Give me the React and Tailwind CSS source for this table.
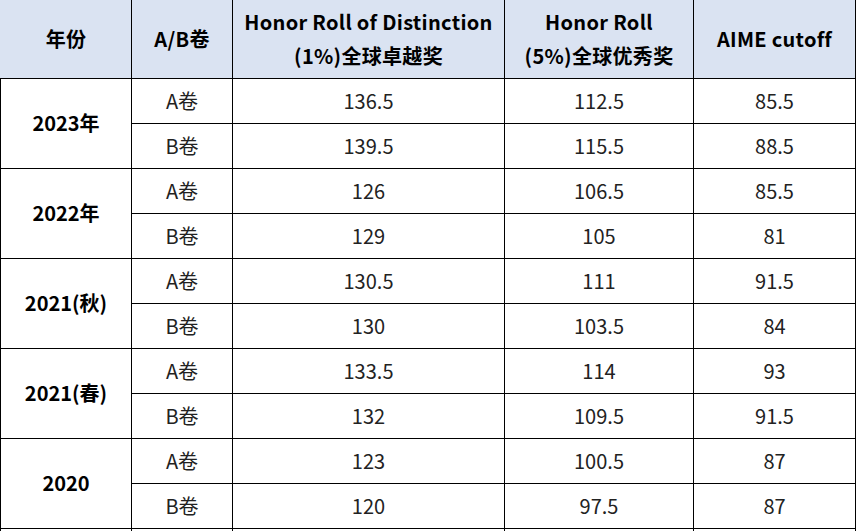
const rows = [
  { year: '2023年', a: ['136.5', '112.5', '85.5'], b: ['139.5', '115.5', '88.5'] },
  { year: '2022年', a: ['126', '106.5', '85.5'], b: ['129', '105', '81'] },
  { year: '2021(秋)', a: ['130.5', '111', '91.5'], b: ['130', '103.5', '84'] },
  { year: '2021(春)', a: ['133.5', '114', '93'], b: ['132', '109.5', '91.5'] },
  { year: '2020', a: ['123', '100.5', '87'], b: ['120', '97.5', '87'] },
]

const cell = 'border border-black text-center align-middle p-0'

function App() {
  return (
    <div
      className="h-[531px] w-[856px] overflow-hidden bg-white text-[#222]"
      style={{ fontFamily: '"Noto Sans CJK SC", "Noto Sans", sans-serif' }}
    >
      <table className="table-fixed border-collapse w-[855px]">
        <colgroup>
          <col className="w-[131px]" />
          <col className="w-[101px]" />
          <col className="w-[272px]" />
          <col className="w-[189px]" />
          <col className="w-[162px]" />
        </colgroup>
        <thead>
          <tr className="h-[78px] bg-[#dae3f2] text-[20px] font-bold text-black leading-[34px] tracking-[0.3px]">
            <th className={`${cell} border-t-0 border-l-[#dae3f2]`}>年份</th>
            <th className={`${cell} border-t-0`}>A/B卷</th>
            <th className={`${cell} border-t-0`}>
              Honor Roll of Distinction
              <br />
              (1%)全球卓越奖
            </th>
            <th className={`${cell} border-t-0`}>
              Honor Roll
              <br />
              (5%)全球优秀奖
            </th>
            <th className={`${cell} border-t-0`}>AIME cutoff</th>
          </tr>
        </thead>
        <tbody className="text-[20px]">
          {rows.map((r) => (
            <>
              <tr key={r.year + 'a'} className="h-[45px]">
                <td rowSpan={2} className={`${cell} font-bold text-black`}>
                  {r.year}
                </td>
                <td className={cell}>A卷</td>
                {r.a.map((v, i) => (
                  <td key={i} className={cell}>
                    {v}
                  </td>
                ))}
              </tr>
              <tr key={r.year + 'b'} className="h-[45px]">
                <td className={cell}>B卷</td>
                {r.b.map((v, i) => (
                  <td key={i} className={cell}>
                    {v}
                  </td>
                ))}
              </tr>
            </>
          ))}
          {/* next group, cut off by the bottom edge */}
          <tr className="h-[45px]">
            <td className={cell}></td>
            <td className={cell}></td>
            <td className={cell}></td>
            <td className={cell}></td>
            <td className={cell}></td>
          </tr>
        </tbody>
      </table>
    </div>
  )
}

export default App
